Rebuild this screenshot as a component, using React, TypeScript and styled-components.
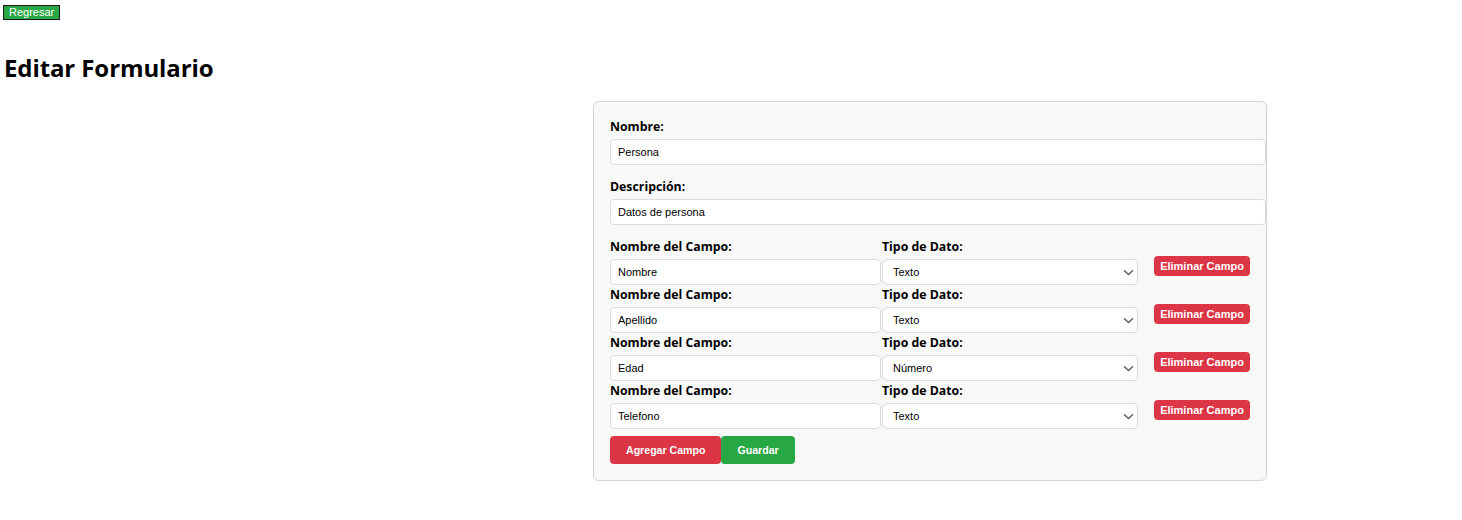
import React, { useState } from 'react';
import styled, { createGlobalStyle } from 'styled-components';

const GlobalStyle = createGlobalStyle`
  body {
    margin: 0;
    background: #ffffff;
    font-family: 'Liberation Sans', Arial, sans-serif;
  }
`;

const Page = styled.div`
  padding: 5px 3px 0;
`;

const BackButton = styled.button`
  display: block;
  height: 15px;
  padding: 0 5px;
  background: #28a745;
  color: #ffffff;
  border: 1px solid #1a1a1a;
  font-family: 'Liberation Sans', Arial, sans-serif;
  font-size: 11px;
  line-height: 13px;
  cursor: pointer;
`;

const Title = styled.h1`
  margin: 32px 0 0 1px;
  font-family: 'Open Sans', sans-serif;
  font-size: 24px;
  font-weight: 700;
  line-height: 32px;
  letter-spacing: -0.1px;
  color: #000000;
`;

const Card = styled.form`
  width: 640px;
  margin: 17px 192px 0 auto;
  padding: 16px;
  background: #f8f8f8;
  border: 1px solid #d3d3d3;
  border-radius: 6px;
`;

const Group = styled.div`
  margin-bottom: 13px;
`;

const Label = styled.label`
  display: block;
  margin-bottom: 4px;
  font-family: 'Open Sans', sans-serif;
  font-size: 12.3px;
  font-weight: 700;
  line-height: 17px;
  color: #000000;
`;

const TextInput = styled.input<{ $wide?: boolean }>`
  display: block;
  box-sizing: border-box;
  width: ${(p) => (p.$wide ? 'calc(100% + 16px)' : '100%')};
  height: 26px;
  padding: 0 7px;
  background: #ffffff;
  border: 1px solid #dcdcdc;
  border-radius: 4px;
  font-family: 'Liberation Sans', Arial, sans-serif;
  font-size: 11px;
  color: #000000;
`;

const SelectWrap = styled.div`
  position: relative;
`;

const Select = styled.select`
  display: block;
  box-sizing: border-box;
  width: 100%;
  height: 26px;
  padding: 0 24px 0 10px;
  appearance: none;
  background: #ffffff;
  border: 1px solid #dcdcdc;
  border-radius: 4px;
  font-family: 'Liberation Sans', Arial, sans-serif;
  font-size: 11px;
  color: #000000;
`;

const Chevron = styled.svg`
  position: absolute;
  right: 4px;
  top: 10px;
  width: 11px;
  height: 7px;
  pointer-events: none;
`;

const FieldRow = styled.div`
  display: grid;
  grid-template-columns: 271px 256px 1fr;
  column-gap: 1px;
  margin-bottom: 1px;
`;

const Button = styled.button<{ $tone: 'red' | 'green' }>`
  border: none;
  border-radius: 4px;
  background: ${(p) => (p.$tone === 'red' ? '#dc3545' : '#28a745')};
  color: #ffffff;
  font-family: 'Liberation Sans', Arial, sans-serif;
  font-weight: 700;
  cursor: pointer;
`;

const RemoveButton = styled(Button)`
  justify-self: end;
  align-self: center;
  margin-top: 9px;
  width: 96px;
  height: 20px;
  padding: 0;
  font-size: 11px;
`;

const Actions = styled.div`
  display: flex;
  margin-top: 7px;
`;

const ActionButton = styled(Button)`
  height: 28px;
  padding: 0 16px;
  font-size: 10.6px;
`;

type Field = { name: string; type: string };

const initialFields: Field[] = [
  { name: 'Nombre', type: 'Texto' },
  { name: 'Apellido', type: 'Texto' },
  { name: 'Edad', type: 'Número' },
  { name: 'Telefono', type: 'Texto' },
];

export default function App() {
  const [fields, setFields] = useState<Field[]>(initialFields);

  return (
    <>
      <GlobalStyle />
      <Page>
        <BackButton type="button">Regresar</BackButton>
        <Title>Editar Formulario</Title>
        <Card onSubmit={(e) => e.preventDefault()}>
          <Group>
            <Label>Nombre:</Label>
            <TextInput $wide defaultValue="Persona" />
          </Group>
          <Group>
            <Label>Descripción:</Label>
            <TextInput $wide defaultValue="Datos de persona" />
          </Group>
          {fields.map((field, idx) => (
            <FieldRow key={idx}>
              <div>
                <Label>Nombre del Campo:</Label>
                <TextInput defaultValue={field.name} />
              </div>
              <div>
                <Label>Tipo de Dato:</Label>
                <SelectWrap>
                  <Select defaultValue={field.type}>
                    <option>Texto</option>
                    <option>Número</option>
                    <option>Fecha</option>
                  </Select>
                  <Chevron viewBox="0 0 11 7">
                    <path d="M1 1.2 5.5 5.5 10 1.2" fill="none" stroke="#5a5a5a" strokeWidth="1.3" />
                  </Chevron>
                </SelectWrap>
              </div>
              <RemoveButton
                type="button"
                $tone="red"
                onClick={() => setFields(fields.filter((_, i) => i !== idx))}
              >
                Eliminar Campo
              </RemoveButton>
            </FieldRow>
          ))}
          <Actions>
            <ActionButton
              type="button"
              $tone="red"
              onClick={() => setFields([...fields, { name: '', type: 'Texto' }])}
            >
              Agregar Campo
            </ActionButton>
            <ActionButton type="submit" $tone="green">
              Guardar
            </ActionButton>
          </Actions>
        </Card>
      </Page>
    </>
  );
}
